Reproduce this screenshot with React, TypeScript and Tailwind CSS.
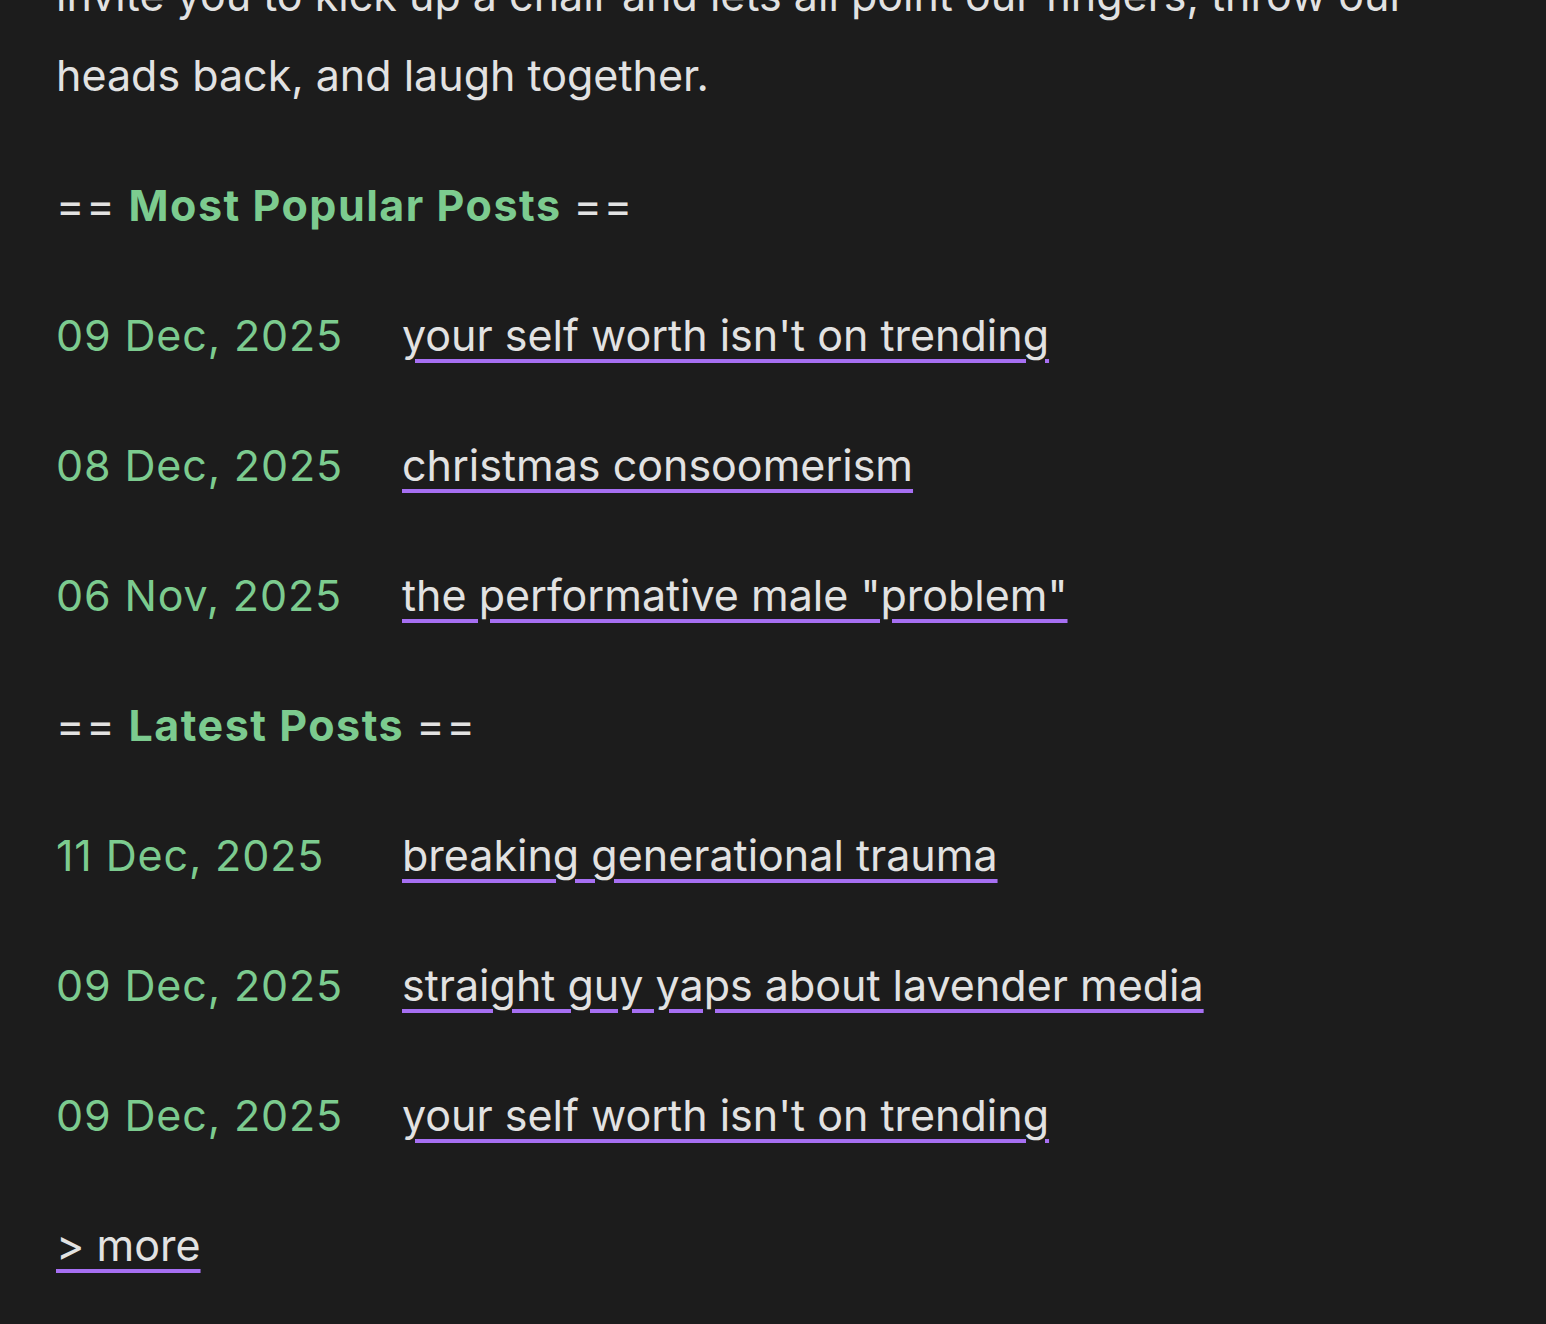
import React from "react";

type Post = { date: string; title: string };

const popular: Post[] = [
  { date: "09 Dec, 2025", title: "your self worth isn't on trending" },
  { date: "08 Dec, 2025", title: "christmas consoomerism" },
  { date: "06 Nov, 2025", title: 'the performative male "problem"' },
];

const latest: Post[] = [
  { date: "11 Dec, 2025", title: "breaking generational trauma" },
  { date: "09 Dec, 2025", title: "straight guy yaps about lavender media" },
  { date: "09 Dec, 2025", title: "your self worth isn't on trending" },
];

const link =
  "underline decoration-[#a66ff2] decoration-4 underline-offset-[8px] text-[#e2e2e2]";

function Heading({ children }: { children: React.ReactNode }) {
  return (
    <h2 className="mt-[50px] leading-[80px] text-[#e2e2e2]">
      <span className="tracking-[0.04em]">==</span>{" "}
      <span className="font-bold tracking-[0.035em] text-[#7ccb8f]">{children}</span>{" "}
      <span className="tracking-[0.04em]">==</span>
    </h2>
  );
}

function PostList({ posts }: { posts: Post[] }) {
  return (
    <ul>
      {posts.map((p, i) => (
        <li key={i} className="mt-[50px] flex leading-[80px]">
          <span className="w-[346px] shrink-0 tracking-[0.02em] text-[#7ccb8f]">{p.date}</span>
          <a href="#" className={link}>
            {p.title}
          </a>
        </li>
      ))}
    </ul>
  );
}

export default function App() {
  return (
    <div className="min-h-screen overflow-hidden bg-[#1c1c1c] px-[56px] pb-[40px] font-['Inter',sans-serif] text-[43px] text-[#e2e2e2]">
      <p className="mt-[-45px] leading-[80px]">
        invite you to kick up a chair and lets all point our fingers, throw our
        <br />
        heads back, and laugh together.
      </p>

      <Heading>Most Popular Posts</Heading>
      <PostList posts={popular} />

      <Heading>Latest Posts</Heading>
      <PostList posts={latest} />

      <div className="mt-[50px] leading-[80px]">
        <a href="#" className={link}>
          &gt; more
        </a>
      </div>
    </div>
  );
}
